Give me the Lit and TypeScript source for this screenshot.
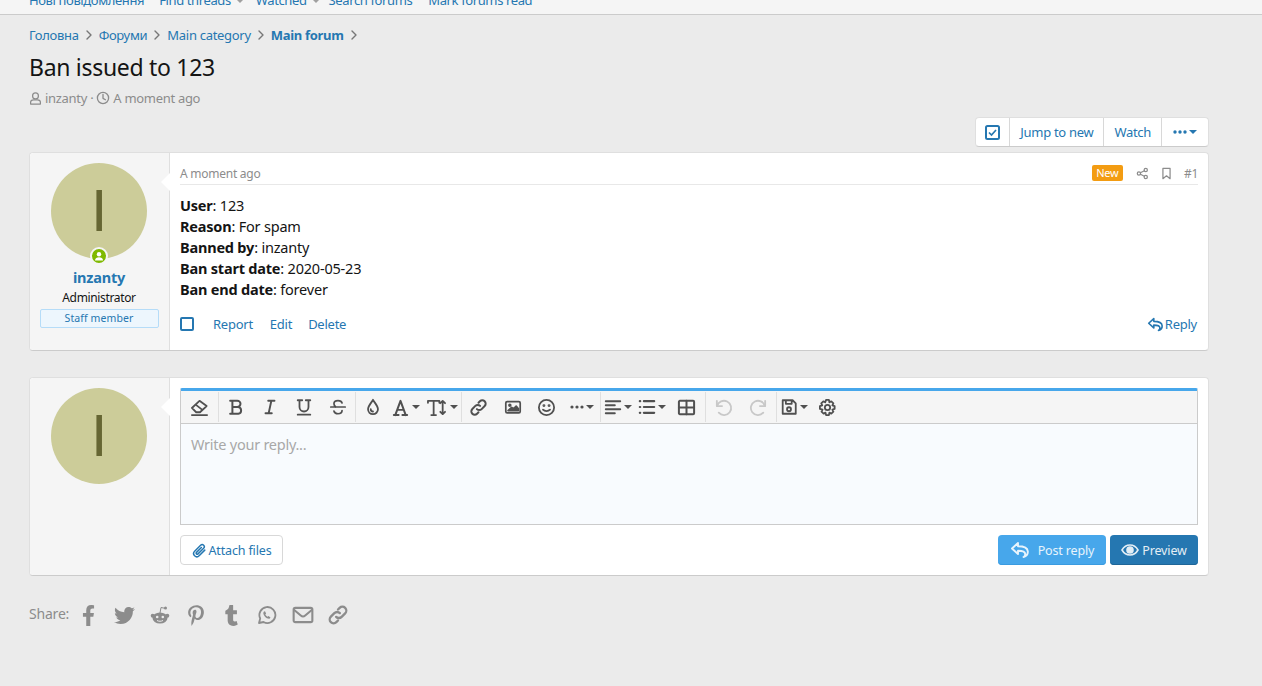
import { LitElement, html, css, svg } from "lit";
import { customElement } from "lit/decorators.js";

const stroke = (w: number, h: number, body: unknown, cls = "") => html`<svg class="ic ${cls}" width=${w} height=${h} viewBox="0 0 20 20" fill="none" stroke="currentColor" stroke-width="1.9" stroke-linecap="round" stroke-linejoin="round">${body}</svg>`;
const fill = (w: number, h: number, vb: string, d: string) => html`<svg class="ic" width=${w} height=${h} viewBox=${vb} fill="currentColor"><path d=${d}></path></svg>`;
const caret = html`<span class="caret"></span>`;
const chev = html`<span class="sep">${stroke(10, 10, svg`<path d="m6 2 8 8-8 8" stroke-width="2.800"/>`)}</span>`;

const replyP = svg`<path d="M8 3 2 8.500 8 14v-3.300c4.500 0 7 .6 7.200 3.200.1 1.400-.7 2.500-1.700 3.100 3-.9 4.500-3 4.300-5.600C17.500 7.500 13.500 6.300 8 6.300z"/>`;
const linkP = svg`<path d="M8.300 11.700a3.500 3.500 0 0 0 5 0l3.200-3.200a3.500 3.500 0 0 0-5-5L10 5M11.700 8.300a3.500 3.500 0 0 0-5 0l-3.200 3.200a3.500 3.500 0 0 0 5 5L10 15" stroke-width="2.100"/>`;

@customElement("app-root")
export class AppRoot extends LitElement {
  static styles = css`
    :host { display: block; height: 686px; overflow: hidden; background: #ebebeb; color: #141414; font-family: "Noto Sans", "Liberation Sans", sans-serif; font-size: 13px; letter-spacing: -0.25px; }
    a { color: #2577b1; text-decoration: none; }
    .ic { display: block; flex: none; }
    .nav { height: 14px; overflow: hidden; background: #f5f5f5; border-bottom: 1px solid #cbcbcb; padding-left: 29px; }
    .nav-row { display: flex; margin-top: -10px; height: 20px; line-height: 20px; font-size: 13px; letter-spacing: -0.38px; }
    .nav-row a { margin-right: 16px; display: flex; align-items: center; }
    .nav-row a.first { margin-right: 15px; }
    .nav-row a.drop { margin-right: 10px; }
    .nav-row a.wide { margin-right: 13px; }
    .nav-row a.drop::after { content: ""; margin-left: 6px; margin-top: 3px; border: 3px solid transparent; border-top-color: #a0a0a0; border-bottom: 0; }
    .wrap { padding: 0 53px 0 29px; }
    .crumbs { display: flex; align-items: center; height: 20px; margin-top: 10px; color: #777; letter-spacing: -0.3px; }
    .crumbs .sep { width: 20px; display: flex; justify-content: center; }
    .crumbs b { font-weight: 700; }
    h1 { margin: 0; font-weight: 400; font-size: 23px; line-height: 32px; margin-top: 6px; color: #141414; letter-spacing: -0.3px; }
    .meta { display: flex; align-items: center; gap: 3px; color: #8c8c8c; height: 18px; margin-top: 6px; letter-spacing: -0.3px; }
    .btns { display: flex; justify-content: flex-end; margin-top: 10px; }
    .bgroup { display: flex; height: 28px; background: #fff; border: 1px solid #dfdfdf; border-bottom-color: #cbcbcb; border-radius: 4px; align-items: stretch; font-size: 13px; letter-spacing: -0.3px; }
    .bgroup > * { display: flex; align-items: center; justify-content: center; border-left: 1px solid #d8d8d8; padding: 0 10px; gap: 2px; }
    .bgroup > *:first-child { border-left: 0; padding: 0; width: 33px; }
    .bgroup > *:last-child { padding: 0; width: 46px; }
    .check { width: 14px; height: 14px; box-sizing: border-box; border: 2px solid #2577b1; border-radius: 2px; }
    .card { display: flex; background: #fff; border: 1px solid #dfdfdf; border-bottom-color: #cbcbcb; border-radius: 4px; }
    .post { margin-top: 5px; height: 199px; box-sizing: border-box; }
    .reply { margin-top: 26px; height: 199px; box-sizing: border-box; }
    .side { position: relative; width: 140px; flex: none; background: #f5f5f5; border-right: 1px solid #dfdfdf; border-radius: 4px 0 0 4px; display: flex; flex-direction: column; align-items: center; padding: 10px 1px 0 0; box-sizing: border-box; }
    .side::after { content: ""; position: absolute; right: -1px; top: 20px; border: 9px solid transparent; border-right-color: #fff; border-left: 0; }
    .avatar-box { position: relative; }
    .avatar { width: 96px; height: 96px; border-radius: 50%; background: #cccc99; color: #666633; display: flex; align-items: center; justify-content: center; font-family: "Liberation Sans", sans-serif; font-size: 59px; line-height: 96px; }
    .online { position: absolute; left: 39px; top: 84px; width: 18px; height: 18px; border-radius: 50%; background: #7fb900; border: 2px solid #f5f5f5; box-sizing: border-box; display: flex; align-items: center; justify-content: center; color: #fff; }
    .name { font-weight: 700; font-size: 14.500px; line-height: 20px; margin-top: 8px; color: #2577b1; letter-spacing: -0.2px; }
    .role { font-size: 12px; line-height: 17px; margin-top: 2px; letter-spacing: -0.35px; }
    .staff { width: 119px; height: 19px; box-sizing: border-box; margin-top: 3px; background: #edf6fd; border: 1px solid #b5dcf8; border-radius: 2px; color: #2577b1; text-align: center; font-size: 10.500px; line-height: 17px; letter-spacing: 0.1px; }
    .main { flex: 1; padding: 10px 10px 0; min-width: 0; display: flex; flex-direction: column; }
    .attrib { display: flex; align-items: center; height: 22px; margin-top: -1px; border-bottom: 1px solid #e8e8e8; color: #8c8c8c; font-size: 12px; }
    .attrib .sp { flex: 1; }
    .new { background: #f39c12; color: #fff; font-size: 11px; border-radius: 2px; padding: 0 4.500px; height: 16px; line-height: 16px; margin-right: 13px; }
    .attrib svg { margin-right: 11px; }
    .body { font-size: 14.500px; line-height: 21px; margin-top: 10px; letter-spacing: -0.2px; }
    .body b { font-weight: 700; }
    .actions { display: flex; align-items: center; margin-top: 14px; height: 20px; }
    .actions a { margin-left: 17px; }
    .actions a.d { margin-left: 16px; }
    .actions .check { margin-right: 2px; }
    .actions .sp { flex: 1; }
    .actions a.rp { display: flex; align-items: center; gap: 1px; margin-right: 1px; }
    .editor { border: 1px solid #cbcbcb; border-top: 3px solid #47a7eb; border-radius: 2px 2px 0 0; height: 137px; box-sizing: border-box; }
    .tools { display: flex; height: 32px; background: #f5f5f5; border-bottom: 1px solid #cbcbcb; color: #505050; box-sizing: content-box; }
    .tg { display: flex; align-items: stretch; border-right: 1px solid #dfdfdf; margin: 1px 0; }
    .tg:last-child { border-right: 0; }
    .t { width: 34px; display: flex; align-items: center; justify-content: center; gap: 2px; flex: none; }
    .t.off { color: #c8c8c8; width: 35px; }
    .t.w36 { width: 36px; }
    .t.w37 { width: 36.500px; }
    .t.w32 { width: 32px; }
    .t.w39 { width: 39px; }
    .caret { width: 0; height: 0; border: 4px solid transparent; border-top-color: currentColor; border-bottom: 0; }
    .area { height: 100px; background: #f8fbfe; padding: 10px; box-sizing: border-box; color: #a8a8a8; font-size: 14.500px; line-height: 21px; letter-spacing: -0.25px; }
    .foot { display: flex; align-items: center; margin-top: 10px; gap: 4px; }
    .foot .sp { flex: 1; }
    .btn { display: flex; align-items: center; justify-content: center; height: 30px; box-sizing: border-box; border-radius: 4px; font-size: 12.500px; letter-spacing: -0.15px; }
    .attach { width: 103px; background: #fff; border: 1px solid #d8d8d8; color: #2577b1; gap: 2px; }
    .post-r { width: 108px; background: #47a7eb; color: #e8f4fc; gap: 8px; box-shadow: inset 0 -1px 0 #3a9be0; }
    .prev { width: 88px; background: #2577b1; color: #e4eef5; gap: 3px; box-shadow: inset 0 -1px 0 #1f6698; }
    .share { display: flex; align-items: center; margin-top: 27px; height: 24px; color: #8c8c8c; font-size: 14px; letter-spacing: -0.2px; }
    .share span { width: 35.600px; display: flex; justify-content: center; flex: none; }
    .share .lbl { width: auto; margin-right: 2px; padding-bottom: 3px; }
  `;

  render() {
    return html`
      <div class="nav"><div class="nav-row">
        <a class="first">Нові повідомлення</a><a class="drop wide">Find threads</a><a class="drop">Watched</a><a>Search forums</a><a>Mark forums read</a>
      </div></div>
      <div class="wrap">
        <div class="crumbs">
          <a>Головна</a>${chev}
          <a>Форуми</a>${chev}
          <a>Main category</a>${chev}
          <a><b>Main forum</b></a>${chev}
        </div>
        <h1>Ban issued to 123</h1>
        <div class="meta">
          ${stroke(13, 15, svg`<circle cx="10" cy="6" r="4.500"/><path d="M2.500 18.500v-3C2.500 13 5 12 7 12h6c2 0 4.500 1 4.500 3.500v3z"/>`)}
          <span>inzanty ·</span>
          ${stroke(14, 14, svg`<circle cx="10" cy="10" r="8"/><path d="M10 5v5.500l3.500 2"/>`)}
          <span>A moment ago</span>
        </div>
        <div class="btns"><div class="bgroup">
          <a>${html`<svg class="ic" width="15" height="15" viewBox="0 0 15 15" fill="none" stroke="#2577b1"><rect x="1" y="1" width="13" height="13" rx="1.500" stroke-width="2"/><path d="m4 7.500 2.500 2.500L11 5" stroke-width="1.700"/></svg>`}</a>
          <a>Jump to new</a>
          <a>Watch</a>
          <a><svg class="ic" width="14" height="4" viewBox="0 0 14 4" fill="currentColor"><circle cx="2" cy="2" r="1.700"/><circle cx="7" cy="2" r="1.700"/><circle cx="12" cy="2" r="1.700"/></svg><span class="caret"></span></a>
        </div></div>

        <div class="card post">
          <div class="side">
            <div class="avatar-box"><div class="avatar">I</div>
              <div class="online"><svg class="ic" width="10" height="10" viewBox="0 0 10 10" fill="currentColor"><circle cx="5" cy="3.200" r="2.200"/><path d="M1 9.500C1 7 3 6.200 5 6.200S9 7 9 9.500z"/></svg></div>
            </div>
            <div class="name">inzanty</div>
            <div class="role">Administrator</div>
            <div class="staff">Staff member</div>
          </div>
          <div class="main">
            <div class="attrib">
              <span>A moment ago</span><span class="sp"></span>
              <span class="new">New</span>
              ${stroke(13, 13, svg`<circle cx="15" cy="4.500" r="2.500"/><circle cx="15" cy="15.500" r="2.500"/><circle cx="4.500" cy="10" r="2.500"/><path d="m6.800 8.800 6-3M6.800 11.200l6 3"/>`)}
              ${stroke(13, 13, svg`<path d="M4.500 2h11v16L10 13.500 4.500 18z"/>`)}
              <span>#1</span>
            </div>
            <div class="body">
              <div><b>User</b>: 123</div>
              <div><b>Reason</b>: For spam</div>
              <div><b>Banned by</b>: inzanty</div>
              <div><b>Ban start date</b>: 2020-05-23</div>
              <div><b>Ban end date</b>: forever</div>
            </div>
            <div class="actions">
              <span class="check"></span>
              <a>Report</a><a>Edit</a><a class="d">Delete</a>
              <span class="sp"></span>
              <a class="rp">${stroke(17, 17, replyP)}Reply</a>
            </div>
          </div>
        </div>

        <div class="card reply">
          <div class="side"><div class="avatar-box"><div class="avatar">I</div></div></div>
          <div class="main">
            <div class="editor">
              <div class="tools">
                <div class="tg"><div class="t w37">${stroke(19, 19, svg`<path d="M2 10.500 10 3l7.500 5.500-7 6.500H6.500zM6 7l7 5.500M2 18h16"/>`)}</div></div>
                <div class="tg">
                  <div class="t">${stroke(18, 18, svg`<path d="M3.500 3h8a3.500 3.500 0 0 1 0 7H6h6.500a3.800 3.800 0 0 1 0 7.500h-9M6 3v14.500" stroke-width="2.200"/>`)}</div>
                  <div class="t">${stroke(18, 18, svg`<path d="M8 3h7M5 17h7M11.500 3l-3 14" stroke-width="2.100"/>`)}</div>
                  <div class="t">${stroke(18, 18, svg`<path d="M3 2.500h5M12 2.500h5M5 2.500V10a5 5 0 0 0 10 0V2.500M3 18.500h14" stroke-width="2"/>`)}</div>
                  <div class="t">${stroke(18, 18, svg`<path d="M2 10h16M14.500 5.500C14 3.500 12 3 10 3 7.500 3 5.500 4 5.500 6.500c0 1.300.6 2.500 2 3.500M14.500 14c0 2.500-2 3.500-4.500 3.500-2.200 0-4-1-4.500-3" stroke-width="1.900"/>`)}</div>
                </div>
                <div class="tg">
                  <div class="t">${stroke(18, 18, svg`<path d="M10 2c1.500 3 5.500 6.500 5.500 10.500a5.500 5.500 0 0 1-11 0C4.500 8.500 8.500 5 10 2zM7.500 12.500A2.500 2.500 0 0 0 10 15" stroke-width="2"/>`)}</div>
                  <div class="t w32">${stroke(19, 19, svg`<path d="M3 18h5M12 18h5M4.500 18 10 3l5.500 15M6.500 12.500h7" stroke-width="2.100"/>`)}${caret}</div>
                  <div class="t w39">${stroke(23, 19, svg`<path d="M1 5V3h12v2M7 3v15M4.500 18h5M16.500 3v14M14 5.500l2.500-2.500L19 5.500M14 14.500l2.500 2.500 2.500-2.500" stroke-width="1.900"/>`)}${caret}</div>
                </div>
                <div class="tg">
                  <div class="t">${stroke(19, 19, linkP)}</div>
                  <div class="t">${stroke(18, 18, svg`<rect x="2" y="4" width="16" height="12.500" rx="1.500"/><circle cx="6.500" cy="8" r="1" fill="currentColor"/><path d="M4.500 14l4-3.500 2 1.500 3-3 2.500 3v2z" fill="currentColor"/>`)}</div>
                  <div class="t">${stroke(19, 19, svg`<circle cx="10" cy="10" r="8"/><circle cx="7.300" cy="8" r=".6" fill="currentColor"/><circle cx="12.700" cy="8" r=".6" fill="currentColor"/><path d="M6.300 12.300c2 2 5.400 2 7.400 0"/>`)}</div>
                  <div class="t w36"><svg class="ic" width="14" height="4" viewBox="0 0 14 4" fill="currentColor"><circle cx="2" cy="2" r="1.600"/><circle cx="7" cy="2" r="1.600"/><circle cx="12" cy="2" r="1.600"/></svg>${caret}</div>
                </div>
                <div class="tg">
                  <div class="t">${stroke(18, 18, svg`<path d="M2 3.500h16M2 8h10M2 12.500h16M2 17h10" stroke-width="2.200"/>`)}${caret}</div>
                  <div class="t">${stroke(18, 18, svg`<path d="M6.500 3.500H18M6.500 10H18M6.500 16.500H18M2 3.500h.5M2 10h.5M2 16.500h.5" stroke-width="2.400"/>`)}${caret}</div>
                  <div class="t w36">${stroke(19, 19, svg`<rect x="2" y="3" width="16" height="14" rx="1" stroke-width="2.100"/><path d="M2 10h16M10 3v14" stroke-width="2.100"/>`)}</div>
                </div>
                <div class="tg">
                  <div class="t off">${stroke(19, 19, svg`<path d="M3 3v5.500h5.500"/><path d="M3.300 8.500A7.500 7.500 0 1 1 5 15.500"/>`)}</div>
                  <div class="t off">${stroke(19, 19, svg`<path d="M17 3v5.500h-5.500"/><path d="M16.700 8.500A7.500 7.500 0 1 0 15 15.500"/>`)}</div>
                </div>
                <div class="tg">
                  <div class="t">${stroke(18, 18, svg`<path d="M3 2.500h11l3.500 3.500v11.500H3zM6.500 2.500v4h6.500v-4" stroke-width="2"/><circle cx="10" cy="12.500" r="2.200" stroke-width="2"/>`)}${caret}</div>
                  <div class="t">${stroke(19, 19, svg`<circle cx="10" cy="10" r="2.800"/><path d="M8.500 2h3l.5 2.500 2-1 2.200 2.200-1.100 2 2.400.8v3l-2.400.7 1.100 2.100-2.200 2.100-2-1-.5 2.600h-3l-.6-2.600-2 1-2.200-2.100 1.100-2.100L2 11.500v-3l2.500-.8-1.100-2 2.200-2.200 2 1z"/>`)}</div>
                </div>
              </div>
              <div class="area">Write your reply...</div>
            </div>
            <div class="foot">
              <div class="btn attach">${stroke(15, 15, svg`<path d="M17 9.500 9.500 17a4 4 0 0 1-6-6L11.500 3a2.800 2.800 0 0 1 4 4L8 14.500a1.400 1.400 0 0 1-2-2l6.500-6.500" stroke-width="2"/>`)}Attach files</div>
              <span class="sp"></span>
              <div class="btn post-r">${stroke(20, 20, replyP)}Post reply</div>
              <div class="btn prev"><svg class="ic" width="18" height="14" viewBox="0 0 18 14" fill="none" stroke="currentColor" stroke-width="1.600"><path d="M1 7c2-3.500 5-5 8-5s6 1.500 8 5c-2 3.500-5 5-8 5S3 10.500 1 7z"/><circle cx="9" cy="7" r="3" fill="currentColor"/></svg>Preview</div>
            </div>
          </div>
        </div>

        <div class="share">
          <span class="lbl">Share:</span>
          <span>${fill(13, 21, "0 0 320 512", "M279.140 288l14.220-92.660h-88.910v-60.130c0-25.350 12.420-50.060 52.240-50.060h40.420V6.260S260.430 0 225.360 0c-73.220 0-121.080 44.380-121.080 124.720v70.620H22.890V288h81.390v224h100.170V288z")}</span>
          <span>${fill(21, 21, "0 0 512 512", "M459.370 151.716c.325 4.548.325 9.097.325 13.645 0 138.720-105.583 298.558-298.558 298.558-59.452 0-114.680-17.219-161.137-47.106 8.447.974 16.568 1.299 25.340 1.299 49.055 0 94.213-16.568 130.274-44.832-46.132-.975-84.792-31.188-98.112-72.772 6.498.974 12.995 1.624 19.818 1.624 9.421 0 18.843-1.300 27.614-3.573-48.081-9.747-84.143-51.980-84.143-102.985v-1.299c13.969 7.797 30.214 12.670 47.431 13.319-28.264-18.843-46.781-51.005-46.781-87.391 0-19.492 5.197-37.360 14.294-52.954 51.655 63.675 129.300 105.258 216.365 109.807-1.624-7.797-2.599-15.918-2.599-24.040 0-57.828 46.782-104.934 104.934-104.934 30.213 0 57.502 12.670 76.670 33.137 23.715-4.548 46.456-13.320 66.599-25.340-7.798 24.366-24.366 44.833-46.132 57.827 21.117-2.273 41.584-8.122 60.426-16.243-14.292 20.791-32.161 39.308-52.628 54.253z")}</span>
          <span><svg class="ic" width="20" height="20" viewBox="0 0 20 20" fill="currentColor"><ellipse cx="10" cy="13" rx="7.500" ry="5.500"/><circle cx="2.700" cy="10.700" r="2"/><circle cx="17.300" cy="10.700" r="2"/><circle cx="15.500" cy="3" r="1.500"/><path d="M10 8 11 2.500l4 .8" fill="none" stroke="currentColor" stroke-width="1"/><circle cx="7.200" cy="12" r="1.300" fill="#ebebeb"/><circle cx="12.800" cy="12" r="1.300" fill="#ebebeb"/><path d="M7 15.500c2 1 4 1 6 0" fill="none" stroke="#ebebeb" stroke-width="1"/></svg></span>
          <span>${fill(16, 21, "0 0 384 512", "M204 6.500C101.400 6.500 0 74.900 0 185.600 0 256 39.600 296 63.600 296c9.900 0 15.600-27.600 15.600-35.400 0-9.300-23.700-29.100-23.700-67.800 0-80.400 61.200-137.400 140.400-137.400 68.100 0 118.500 38.700 118.500 109.800 0 53.100-21.300 152.700-90.300 152.700-24.900 0-46.200-18-46.200-43.800 0-37.800 26.400-74.400 26.400-113.400 0-66.200-93.900-54.200-93.900 25.800 0 16.800 2.100 35.400 9.600 50.700-13.800 59.400-42 147.900-42 209.100 0 18.900 2.700 37.500 4.500 56.400 3.400 3.800 1.700 3.400 6.900 1.500 50.400-69 48.600-82.500 71.400-172.800 12.300 23.400 44.100 36 69.300 36 106.200 0 153.900-103.500 153.900-196.800C384 71.300 298.200 6.500 204 6.500z")}</span>
          <span>${fill(13, 21, "0 0 320 512", "M309.800 480.300c-13.600 14.500-50 31.700-97.400 31.700-120.800 0-147-88.800-147-140.600v-144H17.900c-5.500 0-10-4.500-10-10v-68c0-7.200 4.500-13.600 11.300-16 62-21.800 81.500-76 84.300-117.100.8-11 6.500-16.300 16.100-16.300h70.900c5.500 0 10 4.500 10 10v115.200h83c5.500 0 10 4.400 10 9.900v81.700c0 5.500-4.500 10-10 10h-83.400V360c0 34.200 23.700 53.600 68 35.800 4.800-1.900 9-3.200 12.700-2.200 3.500.9 5.800 3.400 7.400 7.900l22 64.300c1.800 5 3.300 10.600-.4 14.500z")}</span>
          <span>${stroke(20, 20, svg`<path d="M2 18l1.200-4.500A8 8 0 1 1 6.500 17z" stroke-width="1.800"/><path d="M7 6.500c-.8.800-1 2 0 3.700 1 1.800 2.500 3 4 3.400 1.300.3 2-.2 2.500-1.200l-2-1.400-1 .8c-1-.5-1.700-1.300-2.200-2.300l.8-1L8 6.300z" fill="currentColor" stroke="none"/>`)}</span>
          <span>${stroke(22, 22, svg`<rect x="1.500" y="3.500" width="17" height="13" rx="1.500"/><path d="m2 5.500 6 5c1.200 1 2.800 1 4 0l6-5"/>`)}</span>
          <span>${stroke(22, 22, linkP)}</span>
        </div>
      </div>
    `;
  }
}
